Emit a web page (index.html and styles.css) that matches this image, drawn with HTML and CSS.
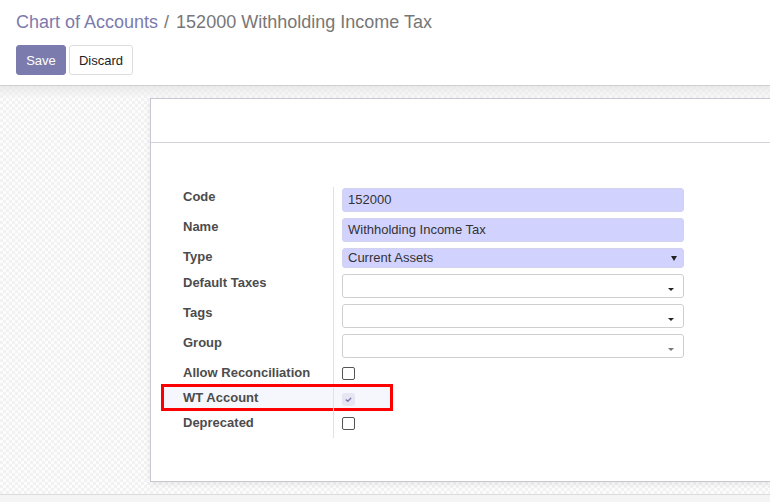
FILE: index.html
```html
<!DOCTYPE html>
<html>
<head>
<meta charset="utf-8">
<link rel="stylesheet" href="styles.css">
</head>
<body>
<div class="page">
  <header class="control-panel">
    <h1 class="breadcrumb"><span class="crumb-link">Chart of Accounts</span><span class="crumb-sep">/</span><span class="crumb-current">152000 Withholding Income Tax</span></h1>
    <div class="buttons">
      <button class="btn btn-primary">Save</button>
      <button class="btn btn-secondary">Discard</button>
    </div>
  </header>
  <main class="view">
    <div class="sheet">
      <div class="sheet-head"></div>
      <div class="form-group">
        <div class="row r30"><div class="label">Code</div><div class="field"><div class="input required">152000</div></div></div>
        <div class="row r30"><div class="label">Name</div><div class="field"><div class="input required">Withholding Income Tax</div></div></div>
        <div class="row r26"><div class="label">Type</div><div class="field"><div class="select required">Current Assets<span class="tri"></span></div></div></div>
        <div class="row r30"><div class="label">Default Taxes</div><div class="field"><div class="input many"><span class="caret"></span></div></div></div>
        <div class="row r30"><div class="label">Tags</div><div class="field"><div class="input many"><span class="caret"></span></div></div></div>
        <div class="row r30"><div class="label">Group</div><div class="field"><div class="input many"><span class="caret light"></span></div></div></div>
        <div class="row r25"><div class="label">Allow Reconciliation</div><div class="field"><span class="checkbox"></span></div></div>
        <div class="row r25 highlighted"><div class="mark"></div><div class="label">WT Account</div><div class="field"><span class="checkbox checked"><svg width="13" height="13" viewBox="0 0 13 13"><path d="M4.2 6.9 L5.8 8.3 L8.8 5.2" fill="none" stroke="#7c7bad" stroke-width="1.4" stroke-linecap="round" stroke-linejoin="round"/></svg></span></div></div>
        <div class="row r25"><div class="label">Deprecated</div><div class="field"><span class="checkbox"></span></div></div>
      </div>
    </div>
  </main>
  <div class="bottom-bar"></div>
</div>
</body>
</html>
```

FILE: styles.css
```css
html, body {
  margin: 0;
  padding: 0;
}
body {
  font-family: "Liberation Sans", Arial, sans-serif;
  font-size: 13px;
  color: #4c4c4c;
  background: #fff;
  overflow: hidden;
}
.page {
  width: 770px;
  height: 502px;
  overflow: hidden;
  display: flex;
  flex-direction: column;
}
.control-panel {
  background: #fff;
  padding: 10px 16px 10px 16px;
  border-bottom: 1px solid #cfcfcf;
}
.breadcrumb {
  margin: 0;
  font-size: 18px;
  line-height: 24px;
  font-weight: normal;
  white-space: nowrap;
}
.crumb-link { color: #7c7bad; }
.crumb-sep { color: #777; margin: 0 7px 0 6px; }
.crumb-current { color: #777; }
.buttons {
  display: flex;
  gap: 3px;
  margin-top: 11px;
}
.btn {
  font-family: inherit;
  font-size: 13px;
  height: 30px;
  padding: 0;
  border-radius: 3px;
  border: 1px solid #ddd;
  cursor: pointer;
}
.btn-primary {
  background: #7c7bad;
  border-color: #7c7bad;
  color: #fff;
  width: 50px;
}
.btn-secondary {
  background: #fff;
  color: #222;
  width: 64px;
}
.view {
  flex: 1;
  padding: 12px 0 12px 150px;
  background-color: #fbfbfb;
  background-image:
    linear-gradient(to bottom, rgba(230,230,230,0.8), rgba(240,240,240,0) 12px),
    conic-gradient(#f2f2f2 25%, #fcfcfc 0 50%, #f2f2f2 0 75%, #fcfcfc 0);
  background-size: 100% 100%, 6px 6px;
  background-repeat: no-repeat, repeat;
}
.sheet {
  width: 700px;
  height: 384px;
  background: #fff;
  border: 1px solid #c9c7d3;
  box-shadow: 0 2px 6px rgba(0,0,0,0.08);
  box-sizing: border-box;
}
.sheet-head {
  height: 43px;
  border-bottom: 1px solid #d4d2dc;
}
.form-group {
  margin-top: 44px;
  margin-left: 32px;
}
.row {
  display: flex;
  position: relative;
}
.r30 { height: 30px; }
.r26 { height: 26px; }
.r25 { height: 25px; }
.label {
  position: relative;
  width: 151px;
  box-sizing: border-box;
  font-weight: bold;
  line-height: 18px;
  padding-top: 1px;
  color: #4c4c4c;
  border-right: 1px solid #e1e1e1;
  white-space: nowrap;
}
.field {
  position: relative;
  padding-left: 8px;
  padding-top: 1px;
}
.input, .select {
  position: relative;
  width: 342px;
  height: 24px;
  box-sizing: border-box;
  border: 1px solid #d6d6e4;
  border-radius: 3px;
  padding: 0 5px;
  line-height: 22px;
  font-size: 13px;
  color: #333;
  background: #fff;
}
.select {
  height: 20px;
  line-height: 18px;
}
.required {
  background: #d2d2ff;
  border-color: #d2d2ee;
}
.many {
  border-color: #cfcfcf;
}
.tri {
  position: absolute;
  right: 6px;
  top: 7px;
  width: 0;
  height: 0;
  border-left: 3px solid transparent;
  border-right: 3px solid transparent;
  border-top: 5px solid #222;
}
.caret {
  position: absolute;
  right: 9px;
  top: 13px;
  width: 0;
  height: 0;
  border-left: 3.5px solid transparent;
  border-right: 3.5px solid transparent;
  border-top: 3px solid #222;
}
.caret.light { border-top-color: #777; }
.checkbox {
  display: block;
  margin-top: 3px;
  width: 13px;
  height: 13px;
  box-sizing: border-box;
  border: 1px solid #555;
  border-radius: 2px;
  background: #fff;
}
.checkbox.checked {
  margin-top: 4px;
  border: none;
  background: #e6e6f2;
  border-radius: 3px;
}
.checkbox svg { display: block; }
.mark {
  position: absolute;
  left: -22px;
  top: -4px;
  width: 232px;
  height: 27px;
  box-sizing: border-box;
  border: 3px solid #ff0000;
  background: #f6f7fc;
}
.bottom-bar {
  height: 7px;
  background: #f4f4f4;
  border-top: 1px solid #dcdcdc;
}
```
